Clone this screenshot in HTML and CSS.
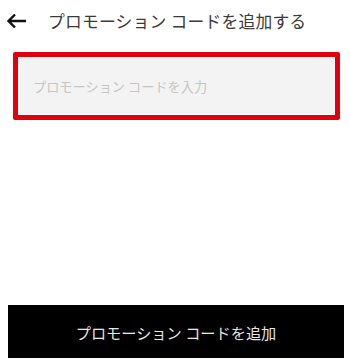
FILE: index.html
```html
<!DOCTYPE html>
<html lang="ja">
<head>
<meta charset="utf-8">
<link rel="stylesheet" href="styles.css">
</head>
<body>
<div class="page">
  <header class="header">
    <svg class="back" width="21" height="16" viewBox="0 0 21 16" aria-hidden="true">
      <path d="M20 8H3M9 1.5L2.5 8L9 14.5" fill="none" stroke="#111" stroke-width="2.4"/>
    </svg>
    <h1 class="title">プロモーション コードを追加する</h1>
  </header>
  <div class="field-wrap">
    <div class="field">プロモーション コードを入力</div>
  </div>
  <div class="spacer"></div>
  <button class="submit">プロモーション コードを追加</button>
</div>
</body>
</html>
```
FILE: styles.css
```css
html, body {
  margin: 0;
  padding: 0;
  background: #fff;
}
.page {
  width: 350px;
  height: 364px;
  display: flex;
  flex-direction: column;
  font-family: "Noto Sans CJK JP", "Noto Sans", sans-serif;
}
.header {
  display: flex;
  align-items: center;
  height: 26px;
  margin-top: 8px;
  padding-left: 6px;
  gap: 21px;
}
.back {
  display: block;
}
.title {
  margin: 0;
  font-size: 16.8px;
  font-weight: 400;
  color: #3a3a3a;
  letter-spacing: 0.2px;
}
.field-wrap {
  margin: 18px 10px 0 13px;
  height: 68px;
  box-sizing: border-box;
  border: 5px solid #e0000e;
  border-radius: 2px;
  padding: 1px;
  background: #fff;
}
.field {
  height: 100%;
  box-sizing: border-box;
  background: #f3f3f3;
  display: flex;
  align-items: center;
  padding-left: 14px;
  font-size: 13.2px;
  color: #c6c6c6;
}
.spacer {
  flex: 1;
}
.submit {
  margin: 0 6px 6px 8px;
  height: 53px;
  border: 0;
  background: #000;
  color: #e6e6e6;
  font-family: "Noto Sans CJK JP", "Noto Sans", sans-serif;
  font-size: 15.2px;
  padding: 0;
}
```
